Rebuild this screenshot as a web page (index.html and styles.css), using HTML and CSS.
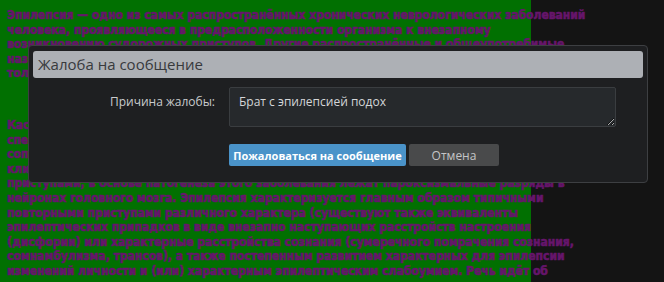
FILE: index.html
```html
<!DOCTYPE html>
<html lang="ru">

<head>
    <meta charset="UTF-8">
    <meta name="viewport" content="width=device-width, initial-scale=1.0">
    <title>Жалоба на сообщение</title>
    <link rel="stylesheet" href="styles.css">
</head>

<body>
    <div class="page">
        <div class="article">
            <p class="para first">
                Эпилепсия — одно из самых распространённых хронических неврологических заболеваний<br>
                человека, проявляющееся в предрасположенности организма к внезапному<br>
                возникновению судорожных приступов. Другие распространённые и общеупотребимые<br>
                названия этих внезапных приступов — эпилептический припадок, «падучая». Эпилепсия<br>
                только человека, но и животных, например, собак, кошек, мышей.
            </p>
            <p class="para">
                Касательно механизмов возникновения, эпилепсия — это хроническое заболевание<br>
                специфическое течение которого характеризуется повторными непровоцированными<br>
                сопутствующими нарушениями сознания и поведения, а также различными<br>
                клиническими проявлениями, которые сопровождаются повторными эпилептическими<br>
                приступами, в основе патогенеза этого заболевания лежат пароксизмальные разряды в<br>
                нейронах головного мозга. Эпилепсия характеризуется главным образом типичными<br>
                повторными приступами различного характера (существуют также эквиваленты<br>
                эпилептических припадков в виде внезапно наступающих расстройств настроения<br>
                (дисфории) или характерные расстройства сознания (сумеречного помрачения сознания,<br>
                сомнамбулизма, трансов), а также постепенным развитием характерных для эпилепсии<br>
                изменений личности и (или) характерным эпилептическим слабоумием. Речь идёт об
            </p>
        </div>
    </div>

    <div class="modal">
        <div class="modal-header">Жалоба на сообщение</div>
        <form id="reportform">
            <div class="form-row">
                <label for="reason" class="form-label">Причина жалобы:</label>
                <textarea id="reason" class="form-input">Брат с эпилепсией подох</textarea>
            </div>
            <div class="form-buttons">
                <input type="submit" class="btn btn-primary" value="Пожаловаться на сообщение">
                <button type="button" class="btn btn-cancel">Отмена</button>
            </div>
        </form>
    </div>
</body>

</html>
```

FILE: styles.css
```css
body {
    margin: 0;
    background-color: #141414;
    font-family: "Open Sans", "Noto Sans", sans-serif;
    overflow: hidden;
}

.page {
    width: 531px;
    height: 282px;
    background-color: #017001;
}

.article {
    padding: 8px 0 0 7px;
    color: #66156b;
    font-family: "Liberation Sans Narrow", "DejaVu Sans Condensed", sans-serif;
    font-weight: bold;
    font-size: 12px;
    line-height: 14.6px;
    white-space: nowrap;
    -webkit-text-stroke: 0.6px #66156b;
}

.para {
    margin: 0;
}

.para.first {
    margin-bottom: 37px;
}

.modal {
    position: absolute;
    left: 28px;
    top: 45px;
    width: 618px;
    height: 136px;
    background-color: #1e1f21;
    border: 1px solid #3d3f42;
    border-radius: 4px;
}

.modal-header {
    margin: 5px 4px 0 4px;
    height: 27px;
    padding-left: 5px;
    background-color: #adb0b5;
    border-radius: 3px;
    color: #383a3d;
    font-size: 15px;
    line-height: 27px;
}

.form-row {
    display: grid;
    grid-template-columns: 186px 387px;
    column-gap: 14px;
    margin-top: 9px;
}

.form-label {
    text-align: right;
    padding-top: 6px;
    color: #c9cbcd;
    font-size: 12px;
}

.form-input {
    height: 40px;
    box-sizing: border-box;
    padding: 5px 9px;
    background-color: #26292c;
    border: 1px solid #3a3d40;
    border-radius: 2px;
    color: #d4d6d8;
    font-family: "Open Sans", "Noto Sans", sans-serif;
    font-size: 12px;
    color-scheme: dark;
    outline: none;
}

.form-buttons {
    display: flex;
    gap: 3px;
    margin: 17px 0 0 200px;
}

.btn {
    height: 22px;
    padding: 0;
    border: none;
    border-radius: 2px;
    font-family: "Open Sans", "Noto Sans", sans-serif;
    font-size: 12px;
    cursor: pointer;
}

.btn-primary {
    width: 177px;
    background-color: #4a93c9;
    color: white;
    font-size: 11px;
    font-weight: bold;
}

.btn-cancel {
    width: 90px;
    background-color: #494a4b;
    color: #c4c5c6;
}
```
